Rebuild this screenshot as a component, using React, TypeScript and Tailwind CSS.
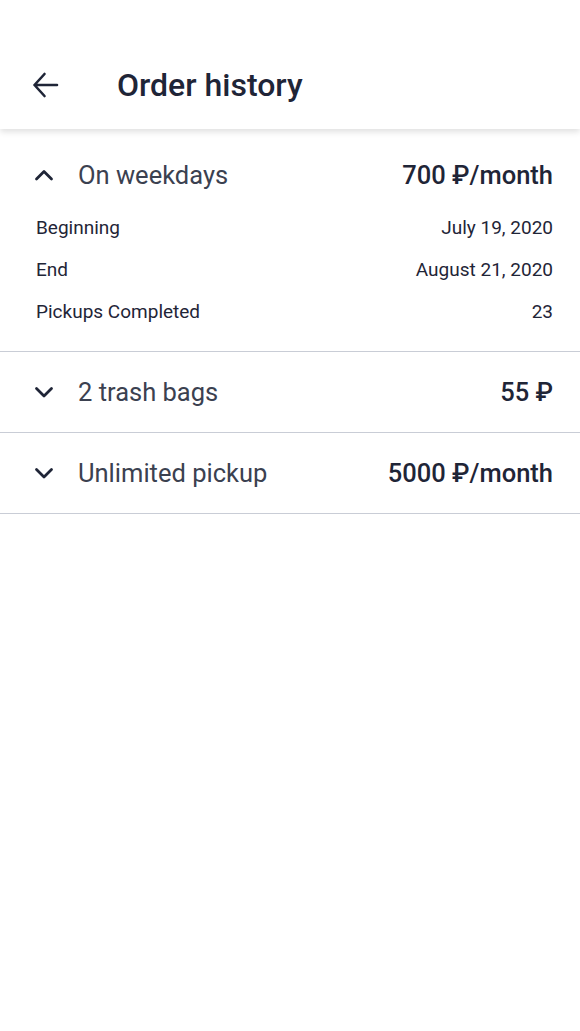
import { useState } from 'react';

type Order = {
  id: string;
  title: string;
  price: string;
  details?: { label: string; value: string }[];
};

const orders: Order[] = [
  {
    id: 'weekdays',
    title: 'On weekdays',
    price: '700 ₽/month',
    details: [
      { label: 'Beginning', value: 'July 19, 2020' },
      { label: 'End', value: 'August 21, 2020' },
      { label: 'Pickups Completed', value: '23' },
    ],
  },
  { id: 'bags', title: '2 trash bags', price: '55 ₽' },
  { id: 'unlimited', title: 'Unlimited pickup', price: '5000 ₽/month' },
];

function Chevron({ up }: { up: boolean }) {
  return (
    <svg width="20" height="20" viewBox="0 0 20 20" fill="none">
      <path
        d={up ? 'M2.5 14 L10 6.5 L17.5 14' : 'M2.5 6.5 L10 14 L17.5 6.5'}
        stroke="#1f2537"
        strokeWidth="2.8"
        strokeLinecap="round"
        strokeLinejoin="round"
      />
    </svg>
  );
}

export default function App() {
  const [open, setOpen] = useState<string | null>('weekdays');

  return (
    <div className="min-h-[1031px] w-[580px] bg-white font-['Roboto',sans-serif] text-[#1f2537]">
      {/* Header */}
      <div className="relative z-10 flex h-[129px] items-center pt-[41px] shadow-[0_3px_6px_rgba(0,0,0,0.12)]">
        <button className="ml-[31px] flex h-[28px] w-[28px] items-center justify-center">
          <svg width="28" height="28" viewBox="0 0 28 28" fill="none">
            <path
              d="M26 14 H3.5 M13.5 3 L3.5 14 L13.5 25"
              stroke="#1f2537"
              strokeWidth="2.6"
              strokeLinecap="round"
              strokeLinejoin="round"
            />
          </svg>
        </button>
        <h1 className="ml-[58px] text-[32px] font-medium">Order history</h1>
      </div>

      {/* Orders */}
      <div>
        {orders.map((o, i) => {
          const isOpen = open === o.id;
          return (
            <div key={o.id} className={`border-b border-[#c9cdd6] ${i === 0 ? 'pt-[6px]' : ''}`}>
              <button
                onClick={() => setOpen(isOpen ? null : o.id)}
                className="flex h-[80px] w-full items-center pl-[34px] pr-[27px]"
              >
                <Chevron up={isOpen} />
                <span className="ml-[24px] text-[25.5px] text-[#3b4150]">{o.title}</span>
                <span className="ml-auto text-[25.5px] font-medium">{o.price}</span>
              </button>
              {isOpen && o.details && (
                <div className="-mt-[8px] flex flex-col pb-[18px] pl-[36px] pr-[27px]">
                  {o.details.map((d) => (
                    <div key={d.label} className="flex h-[42px] items-center justify-between text-[19px]">
                      <span>{d.label}</span>
                      <span>{d.value}</span>
                    </div>
                  ))}
                </div>
              )}
            </div>
          );
        })}
      </div>
    </div>
  );
}
